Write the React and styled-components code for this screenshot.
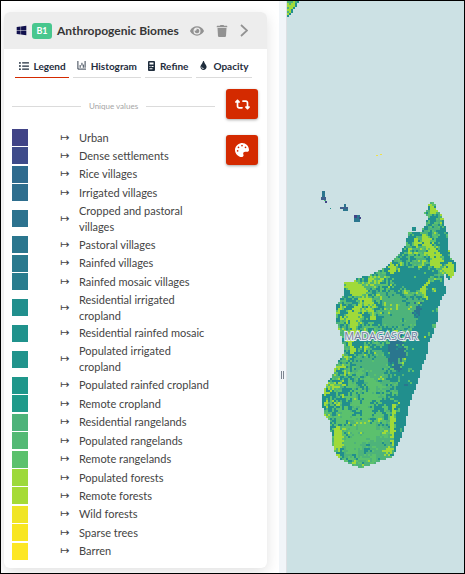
import React from "react";
import styled, { createGlobalStyle } from "styled-components";
import { FaWindows, FaListUl, FaEye, FaTrash, FaTint, FaPalette } from "react-icons/fa";
import { FaRetweet } from "react-icons/fa6";

const GlobalStyle = createGlobalStyle`
  * { box-sizing: border-box; }
  html, body { margin: 0; height: 100%; }
  body { font-family: Lato, "Liberation Sans", sans-serif; background: #fff; color: #444; }
  button { font: inherit; color: inherit; border: 0; padding: 0; background: none; cursor: pointer; }
`;

const Page = styled.main`
  display: grid;
  grid-template-columns: minmax(0, 278fr) 8px minmax(0, 177fr);
  min-height: 100vh;
  border: 1px solid #000;
  overflow: hidden;
`;

const Sidebar = styled.aside`
  display: flex;
  padding: 11px 12px 5px 3px;
`;

const Panel = styled.section`
  flex: 1;
  display: flex;
  flex-direction: column;
  min-width: 0;
  border-radius: 6px;
  background: #fff;
  box-shadow: 0 4px 14px rgba(0, 0, 0, 0.12);
`;

const PanelHeader = styled.header`
  display: flex;
  align-items: center;
  gap: 5px;
  height: 37px;
  padding: 0 19px 0 12px;
  border-radius: 6px 6px 0 0;
  background: #ededed;
`;

const Badge = styled.span`
  display: grid;
  place-items: center;
  width: 20px;
  height: 16px;
  border-radius: 3px;
  background: #48c78e;
  color: #fff;
  font-size: 9px;
  font-weight: 700;
`;

const Title = styled.h1`
  flex: 1;
  margin: 0;
  color: #363636;
  font-size: 12px;
  font-weight: 700;
  white-space: nowrap;
`;

const Actions = styled.div`
  display: flex;
  align-items: center;
  gap: 12px;
  color: #929292;
`;

const IconButton = styled.button`
  display: grid;
  place-items: center;
`;

const Tabs = styled.nav`
  display: flex;
  gap: 4px;
  padding: 5px 15px 0 11px;
`;

const Tab = styled.button`
  display: flex;
  flex: 1 1 auto;
  align-items: center;
  justify-content: center;
  gap: 5px;
  height: 24px;
  && {
    border-bottom: 1px solid ${(p) => (p.$active ? "#d42a00" : "#dbdbdb")};
    color: #1f2d3d;
    font-size: 10px;
    font-weight: 700;
  }
`;

const Body = styled.div`
  flex: 1;
  display: grid;
  grid-template-columns: minmax(0, 1fr) 32px;
  column-gap: 11px;
  padding: 11px 9px 8px 8px;
`;

const Legend = styled.div`
  display: flex;
  flex-direction: column;
  gap: 10px;
`;

const Divider = styled.h2`
  display: flex;
  align-items: center;
  gap: 8px;
  height: 26px;
  margin: 4px 0 0;
  color: #a5a5a5;
  font-size: 8px;
  font-weight: 400;
  line-height: 12px;
  &::before, &::after { content: ""; flex: 1; height: 1px; background: #dbdbdb; }
`;

const Classes = styled.ul`
  flex: 1;
  display: grid;
  align-content: space-between;
  margin: 0;
  padding: 0;
  list-style: none;
`;

const ClassRow = styled.li`
  display: grid;
  grid-template-columns: 48px 19px minmax(0, 132px);
  align-items: center;
  font-size: 11px;
  line-height: 16px;
`;

const Swatch = styled.span`
  width: 16px;
  height: 17px;
  background: ${(p) => p.$color};
`;

const Arrow = styled.span`
  font-family: "DejaVu Sans", sans-serif;
`;

const Tools = styled.div`
  display: flex;
  flex-direction: column;
  gap: 16px;
`;

const ToolButton = styled.button`
  display: grid;
  place-items: center;
  height: 30px;
  && { border-radius: 3px; background: #d42a00; color: #fff; }
  box-shadow: 0 1px 3px rgba(0, 0, 0, 0.35);
`;

const Splitter = styled.div`
  display: flex;
  align-items: center;
  justify-content: center;
  gap: 1px;
  padding-top: 176px;
  border-right: 1px solid #dde0e4;
  background: #f1f5f9;
`;

const Grip = styled.span`
  width: 1px;
  height: 8px;
  background: #7d8590;
`;

const MapPane = styled.section`
  overflow: hidden;
  background: #cce1e4;
`;

const MapDrawing = styled.svg`
  display: block;
  width: 100%;
  height: 100%;
`;

const classes = [
  ["Urban", "#414487"],
  ["Dense settlements", "#3f4b8a"],
  ["Rice villages", "#2f6b8e"],
  ["Irrigated villages", "#2e6e8e"],
  ["Cropped and pastoral villages", "#2c728e"],
  ["Pastoral villages", "#2a768e"],
  ["Rainfed villages", "#29798e"],
  ["Rainfed mosaic villages", "#287c8e"],
  ["Residential irrigated cropland", "#218f8d"],
  ["Residential rainfed mosaic", "#20928c"],
  ["Populated irrigated cropland", "#20938c"],
  ["Populated rainfed cropland", "#1f978b"],
  ["Remote cropland", "#1f9a8a"],
  ["Residential rangelands", "#4db37a"],
  ["Populated rangelands", "#53b974"],
  ["Remote rangelands", "#5bc16d"],
  ["Populated forests", "#9dd93b"],
  ["Remote forests", "#a5db36"],
  ["Wild forests", "#f0e525"],
  ["Sparse trees", "#f8e621"],
  ["Barren", "#fde725"],
];

const TEAL = "#218f8d";
const GREEN = "#4db37a";
const MINT = "#5bc16d";
const LIME = "#a0da39";
const BLUE = "#2a768e";

const coast = [
  [432, 202], [436, 204], [436, 209], [443, 217], [445, 226], [448, 236], [449, 250], [451, 258],
  [456, 262], [456, 271], [450, 280], [447, 278], [444, 271], [444, 281], [447, 293], [442, 298],
  [439, 307], [437, 322], [434, 331], [429, 342], [427, 355], [422, 366], [419, 378], [414, 392],
  [409, 407], [406, 422], [402, 435], [396, 448], [394, 456], [383, 460], [371, 465], [360, 468],
  [349, 464], [342, 460], [336, 455], [333, 445], [331, 432], [331, 422], [324, 414], [321, 398],
  [328, 381], [332, 376], [336, 365], [345, 352], [342, 340], [337, 323], [335, 308], [344, 294],
  [345, 283], [352, 282], [358, 278], [367, 276], [377, 272], [390, 264], [398, 256], [405, 246],
  [409, 232], [420, 233], [426, 225], [428, 216], [424, 212], [428, 210], [429, 204],
];

const hash = (x, y) => {
  let n = (x * 374761393 + y * 668265263) | 0;
  n = Math.imul(n ^ (n >>> 13), 1274126177);
  return ((n ^ (n >>> 16)) >>> 0) / 4294967296;
};

const noise = (x, y, s) => {
  const gx = Math.floor(x / s), gy = Math.floor(y / s);
  const u = x / s - gx, v = y / s - gy;
  const top = hash(gx, gy) * (1 - u) + hash(gx + 1, gy) * u;
  const low = hash(gx, gy + 1) * (1 - u) + hash(gx + 1, gy + 1) * u;
  return top * (1 - v) + low * v;
};

const inside = (x, y) => {
  let hit = false;
  for (let i = 0, j = coast.length - 1; i < coast.length; j = i++) {
    const [ax, ay] = coast[i], [bx, by] = coast[j];
    if (ay > y !== by > y && x < ((bx - ax) * (y - ay)) / (by - ay) + ax) hit = !hit;
  }
  return hit;
};

/* Vegetation patches: centre, radii, cover and strength */
const patches = [
  [432, 208, 5, 6, LIME, 0.6], [435, 222, 7, 11, GREEN, 0.5], [424, 240, 12, 6, LIME, 0.6],
  [431, 249, 5, 8, LIME, 0.6], [438, 264, 8, 13, LIME, 0.55], [449, 269, 4, 8, LIME, 0.7],
  [415, 241, 6, 7, LIME, 0.5],
  [392, 267, 8, 6, LIME, 0.6], [355, 287, 16, 8, LIME, 0.7], [428, 290, 8, 8, LIME, 0.65],
  [423, 323, 5, 14, LIME, 0.75], [364, 307, 20, 13, LIME, 0.55], [351, 327, 6, 26, LIME, 0.6],
  [338, 310, 6, 13, LIME, 0.5], [343, 355, 10, 24, LIME, 0.35], [334, 386, 12, 22, LIME, 0.5],
  [326, 399, 5, 12, LIME, 0.5], [337, 441, 5, 16, LIME, 0.7], [392, 421, 3, 26, LIME, 0.75],
  [382, 424, 7, 10, LIME, 0.4], [399, 388, 3, 13, LIME, 0.5], [387, 448, 5, 7, LIME, 0.6],
  [396, 352, 8, 21, BLUE, 0.8], [417, 309, 7, 8, BLUE, 0.5], [404, 384, 6, 8, BLUE, 0.45],
  [404, 276, 22, 16, TEAL, 0.7], [444, 240, 5, 28, TEAL, 0.8],
  [398, 310, 20, 22, GREEN, 0.7], [362, 416, 26, 46, MINT, 0.68], [372, 381, 24, 31, GREEN, 0.7],
  [370, 440, 27, 24, GREEN, 0.85],
];

const coverAt = (x, y) => {
  const seed = hash(x + 17, y + 43);
  const clump = noise(x, y, 6) * 0.65 + seed * 0.35;
  const east = y > 280 ? (y < 380 ? 429 - (y - 280) * 0.31 : 398 - (y - 380) * 0.08) : 500;
  if (x > east && hash(x >> 2, y >> 2) > 0.06) return TEAL;
  for (const [cx, cy, rx, ry, color, strength] of patches) {
    const d = ((x - cx) / rx) ** 2 + ((y - cy) / ry) ** 2;
    if (d < 1.15 && clump < strength * (1.15 - d * 0.45) * 0.85) return color;
  }
  const n = noise(x + 91, y + 33, 5) * 0.6 + hash(x + 5, y + 11) * 0.4;
  if (n > 0.76) return LIME;
  if (n > 0.5) return n > 0.6 ? GREEN : MINT;
  return TEAL;
};

const cellsByColor = {};
const addCell = (x, y, color, w = 2, h = 2) => {
  cellsByColor[color] = (cellsByColor[color] || "") + `M${x} ${y}h${w}v${h}h-${w}z`;
};
for (let y = 202; y < 470; y += 2) {
  for (let x = 320; x < 458; x += 2) {
    if (inside(x + 1, y + 1)) addCell(x, y, coverAt(x, y));
  }
}
for (let y = 1; y < 17; y += 2) {
  const reach = 12 - y * 0.7;
  for (let x = 0; x < reach; x += 2) {
    addCell(287 + x, y, x + 2 >= reach ? TEAL : hash(x, y) > 0.6 ? GREEN : LIME);
  }
}
[
  [322, 191, 3, 7, BLUE], [321, 197, 5, 3, "#3f5f8c"], [324, 199, 2, 2, GREEN], [325, 201, 2, 2, "#414487"],
  [344, 204, 2, 6, BLUE], [340, 207, 8, 2, "#3f5f8c"], [343, 208, 5, 3, BLUE],
  [354, 215, 6, 7, BLUE], [354, 215, 3, 3, "#414487"], [359, 217, 2, 2, "#414487"],
  [330, 208, 1, 1, TEAL], [412, 227, 4, 4, TEAL], [376, 155, 2, 1, "#eee04c"], [380, 154, 2, 1, "#eee04c"],
].forEach(([x, y, w, h, color]) => addCell(x, y, color, w, h));

const MapLabel = styled.text`
  fill: #737e9c;
  stroke: #e6edf1;
  stroke-width: 2px;
  paint-order: stroke;
  font-family: "Open Sans", sans-serif;
  font-size: 11px;
  text-anchor: middle;
`;

const HistogramIcon = () => (
  <svg width="9" height="9" viewBox="0 0 10 10" fill="none" stroke="currentColor" aria-hidden="true">
    <path d="M1 0v9h9" />
    <path d="M3.500 7.500V4.500M5.500 5V2M7 7.500V4M9 7.500V0" />
  </svg>
);

const RefineIcon = () => (
  <svg width="7" height="10" viewBox="0 0 7 10" fill="currentColor" aria-hidden="true">
    <path fillRule="evenodd" d="M1 0h5q1 0 1 1v8q0 1-1 1H1Q0 10 0 9V1q0-1 1-1zM1.500 1.500v2h4v-2zM1.500 5v1h1V5zM3.500 5v1h2V5zM1.500 7.300v1h3v-1z" />
  </svg>
);

const ChevronIcon = () => (
  <svg width="8" height="13" viewBox="0 0 8 13" fill="none" stroke="currentColor" strokeWidth="1.700" aria-hidden="true">
    <path d="M1 1l6 5.500L1 12" />
  </svg>
);

const tabs = [
  ["Legend", <FaListUl size={10} />],
  ["Histogram", <HistogramIcon />],
  ["Refine", <RefineIcon />],
  ["Opacity", <FaTint size={9} />],
];

export default function App() {
  return (
    <Page>
      <GlobalStyle />
      <Sidebar>
        <Panel>
          <PanelHeader>
            <FaWindows size={11} color="#11104d" />
            <Badge>B1</Badge>
            <Title>Anthropogenic Biomes</Title>
            <Actions>
              <IconButton aria-label="Toggle visibility"><FaEye size={14} /></IconButton>
              <IconButton aria-label="Remove layer"><FaTrash size={12} /></IconButton>
              <IconButton aria-label="Collapse"><ChevronIcon /></IconButton>
            </Actions>
          </PanelHeader>
          <Tabs>
            {tabs.map(([name, icon], i) => (
              <Tab key={name} type="button" $active={i === 0}>{icon}{name}</Tab>
            ))}
          </Tabs>
          <Body>
            <Legend>
              <Divider>Unique values</Divider>
              <Classes>
                {classes.map(([name, color]) => (
                  <ClassRow key={name}>
                    <Swatch $color={color} />
                    <Arrow>↦</Arrow>
                    <span>{name}</span>
                  </ClassRow>
                ))}
              </Classes>
            </Legend>
            <Tools>
              <ToolButton aria-label="Reverse colours"><FaRetweet size={15} /></ToolButton>
              <ToolButton aria-label="Choose palette"><FaPalette size={14} /></ToolButton>
            </Tools>
          </Body>
        </Panel>
      </Sidebar>
      <Splitter role="separator" aria-orientation="vertical"><Grip /><Grip /></Splitter>
      <MapPane>
        <MapDrawing viewBox="287 1 177 572" preserveAspectRatio="xMidYMid slice" role="img" aria-label="Biome map of Madagascar">
          {Object.entries(cellsByColor).map(([color, d]) => (
            <path key={color} d={d} fill={color} shapeRendering="crispEdges" />
          ))}
          <MapLabel x="381" y="340">MADAGASCAR</MapLabel>
        </MapDrawing>
      </MapPane>
    </Page>
  );
}
